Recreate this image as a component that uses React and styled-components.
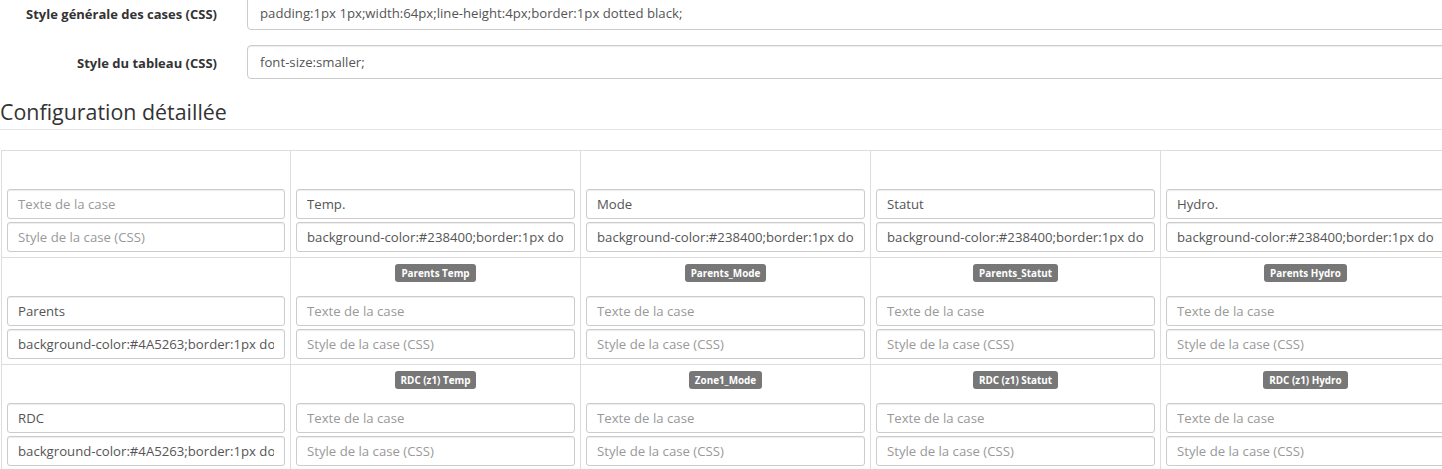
import React from "react";
import styled, { createGlobalStyle } from "styled-components";

const GlobalStyle = createGlobalStyle`
  html, body {
    margin: 0;
    padding: 0;
    background: #fff;
    overflow: hidden;
  }
  body {
    font-family: "Open Sans", "Liberation Sans", sans-serif;
    font-size: 13px;
    color: #333;
  }
  * {
    box-sizing: border-box;
  }
`;

const Page = styled.div`
  width: 1480px;
  margin-top: -4px;
`;

const FormRow = styled.div`
  display: grid;
  grid-template-columns: 217px 1fr;
  column-gap: 30px;
  align-items: center;
  margin-bottom: 15px;
`;

const Label = styled.label`
  text-align: right;
  font-weight: 700;
  font-size: 13px;
  color: #333;
  padding-top: ${(p) => p.$offset || 0}px;
`;

const Control = styled.input`
  display: block;
  width: 100%;
  height: ${(p) => (p.$small ? 30 : 34)}px;
  padding: ${(p) => (p.$small ? "5px 10px" : "6px 12px")};
  font-family: "Open Sans", "Liberation Sans", sans-serif;
  font-size: 13.18px;
  color: #555;
  background: #fff;
  border: 1px solid #ccc;
  border-radius: ${(p) => (p.$small ? 3 : 4)}px;
  box-shadow: inset 0 1px 1px rgba(0, 0, 0, 0.075);
  outline: none;

  &::placeholder {
    color: #999;
    opacity: 1;
  }
`;

const Legend = styled.h3`
  margin: 18px 0 20px;
  padding-bottom: 2px;
  font-size: 21.4px;
  font-weight: 400;
  line-height: 30px;
  color: #333;
  border-bottom: 1px solid #e5e5e5;
`;

const Grid = styled.div`
  display: grid;
  grid-template-columns: 289px repeat(4, 290px);
  width: max-content;
  margin-left: 1px;
  border-top: 1px solid #ddd;
  border-left: 1px solid #ddd;
`;

const Cell = styled.div`
  display: flex;
  flex-direction: column;
  gap: 3px;
  padding: 5px;
  border-right: 1px solid #ddd;
  border-bottom: 1px solid #ddd;
`;

const BadgeLine = styled.div`
  height: 30px;
  padding-top: 1px;
  display: flex;
  justify-content: center;
  align-items: flex-start;
`;

const Badge = styled.span`
  display: inline-block;
  height: 18px;
  line-height: 18px;
  padding: 0 6px;
  font-size: 9.9px;
  font-weight: 700;
  color: #fff;
  background: #777;
  border-radius: 3px;
  white-space: nowrap;
`;

const greenStyle = "background-color:#238400;border:1px dotted black;";
const slateStyle = "background-color:#4A5263;border:1px dotted black;";

const rows = [
  [
    { text: "", css: "" },
    { text: "Temp.", css: greenStyle },
    { text: "Mode", css: greenStyle },
    { text: "Statut", css: greenStyle },
    { text: "Hydro.", css: greenStyle },
  ],
  [
    { text: "Parents", css: slateStyle },
    { badge: "Parents Temp" },
    { badge: "Parents_Mode" },
    { badge: "Parents_Statut" },
    { badge: "Parents Hydro" },
  ],
  [
    { text: "RDC", css: slateStyle },
    { badge: "RDC (z1) Temp" },
    { badge: "Zone1_Mode" },
    { badge: "RDC (z1) Statut" },
    { badge: "RDC (z1) Hydro" },
  ],
];

const CaseCell = ({ badge, text = "", css = "" }) => (
  <Cell>
    <BadgeLine>{badge && <Badge>{badge}</Badge>}</BadgeLine>
    <Control $small defaultValue={text} placeholder="Texte de la case" />
    <Control $small defaultValue={css} placeholder="Style de la case (CSS)" />
  </Cell>
);

const App = () => {
  return (
    <Page>
      <GlobalStyle />
      <FormRow>
        <Label $offset={2}>Style générale des cases (CSS)</Label>
        <Control defaultValue="padding:1px 1px;width:64px;line-height:4px;border:1px dotted black;" />
      </FormRow>
      <FormRow>
        <Label $offset={1}>Style du tableau (CSS)</Label>
        <Control defaultValue="font-size:smaller;" />
      </FormRow>

      <Legend>Configuration détaillée</Legend>

      <Grid>
        {rows.map((row, r) =>
          row.map((cell, c) => <CaseCell key={`${r}_${c}`} {...cell} />)
        )}
      </Grid>
    </Page>
  );
};

export default App;
